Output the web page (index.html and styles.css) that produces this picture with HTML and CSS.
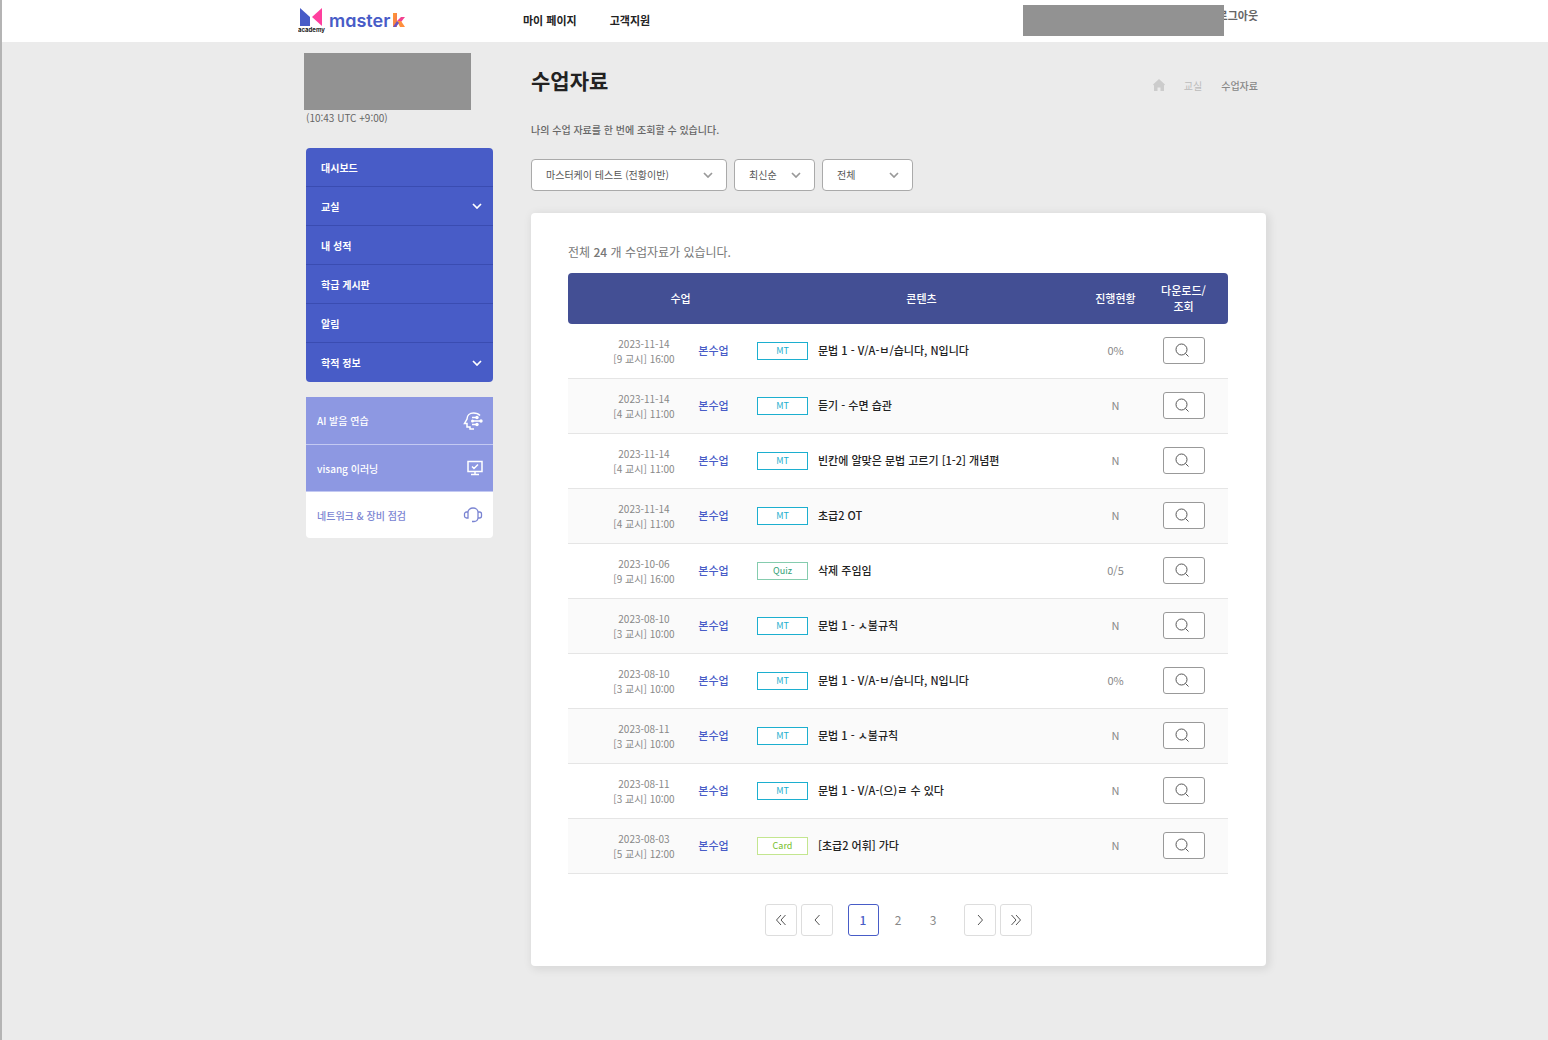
FILE: index.html
```html
<!DOCTYPE html>
<html lang="ko">
<head>
    <meta charset="UTF-8">
    <meta name="viewport" content="width=device-width, initial-scale=1.0">
    <title>수업자료 - master k academy</title>
    <link rel="stylesheet" href="styles.css">
</head>
<body>
    <svg class="sprite" aria-hidden="true">
        <symbol id="icon-down" viewBox="0 0 10 6"><path d="M1 1l4 4 4-4"/></symbol>
        <symbol id="icon-search" viewBox="0 0 14 14"><circle cx="6.500" cy="6.500" r="5.500"/><path d="M10.500 10.500l3 3"/></symbol>
    </svg>

    <header class="header">
        <div class="container header-inner">
            <a href="#" class="logo" aria-label="master k academy">
                <svg width="110" height="30" viewBox="0 0 110 30">
                    <defs>
                        <linearGradient id="k-color" x1="0" y1="0" x2="1" y2="1">
                            <stop offset="0" stop-color="#ff9d2e"/>
                            <stop offset="0.6" stop-color="#f97f4b"/>
                            <stop offset="1" stop-color="#ff9d2e"/>
                        </linearGradient>
                    </defs>
                    <path d="M2 3l10 9v9H2z" fill="#485cc7"/>
                    <path d="M24 3v18L14 12z" fill="#ff3f9e"/>
                    <text x="0" y="27" class="logo-sub">academy</text>
                    <text x="31" y="22" class="logo-name">master</text>
                    <path d="M95 8h4v14h-4z" fill="url(#k-color)"/>
                    <path d="M99 16l4-4h4l-4 5z" fill="#f2408f"/>
                    <path d="M99 16l4 0 4 6h-5z" fill="#ff8f3c"/>
                    <path d="M99 16l2 2-3 4h-3z" fill="#6a52c0"/>
                </svg>
            </a>
            <nav class="main-nav">
                <a href="#">마이 페이지</a>
                <a href="#">고객지원</a>
            </nav>
            <div class="account">
                <span class="account-name"></span>
                <a href="#" class="logout">로그아웃</a>
            </div>
        </div>
    </header>

    <div class="container layout">
        <aside class="sidebar">
            <div class="profile"></div>
            <p class="timezone">(10:43 UTC +9:00)</p>

            <nav class="side-menu">
                <a href="#">대시보드</a>
                <a href="#">교실 <svg class="chevron"><use href="#icon-down"/></svg></a>
                <a href="#">내 성적</a>
                <a href="#">학급 게시판</a>
                <a href="#">알림</a>
                <a href="#">학적 정보 <svg class="chevron"><use href="#icon-down"/></svg></a>
            </nav>

            <nav class="side-links">
                <a href="#">
                    AI 발음 연습
                    <svg width="20" height="18" viewBox="0 0 20 18">
                        <path d="M17 3.500C15.500 1.800 13 1 10.500 1 6.500 1 4 3.500 4 7L1.500 11.500H4V15h3v2h4"/>
                        <path d="M9 9h9M9 5.500h5M9 12.500h5"/>
                        <circle class="dot" cx="9.500" cy="9" r="1.500"/>
                        <circle class="dot" cx="14" cy="5.500" r="1.700"/>
                        <circle class="dot" cx="14" cy="12.500" r="1.700"/>
                        <circle class="dot" cx="18" cy="9" r="1.700"/>
                    </svg>
                </a>
                <a href="#">
                    visang 이러닝
                    <svg width="16" height="16" viewBox="0 0 16 16">
                        <path d="M1 1.500h14v10H1zM8 11.500v3M4 14.500h8M5 6.500l2 2 4-4"/>
                    </svg>
                </a>
                <a href="#" class="light">
                    네트워크 &amp; 장비 점검
                    <svg width="20" height="16" viewBox="0 0 20 16">
                        <path d="M5 5v6H3.500A2 2 0 0 1 1.500 9V7a2 2 0 0 1 2-2zM5 5a5 4 0 0 1 10 0v6a4 4 0 0 1-4 3.500H9M15 5h1.500a2 2 0 0 1 2 2v2a2 2 0 0 1-2 2H15"/>
                    </svg>
                </a>
            </nav>
        </aside>

        <main>
            <div class="page-head">
                <h1>수업자료</h1>
                <nav class="breadcrumb">
                    <a href="#" aria-label="홈"><svg width="12" height="12" viewBox="0 0 12 12"><path d="M6 0l6 5.500-1 1V12H7.500V8.500h-3V12H1V6.500l-1-1z"/></svg></a>
                    <a href="#">교실</a>
                    <strong>수업자료</strong>
                </nav>
            </div>
            <p class="description">나의 수업 자료를 한 번에 조회할 수 있습니다.</p>

            <div class="filters">
                <div class="select-box wide">
                    <select aria-label="반"><option>마스터케이 테스트 (전황이반)</option></select>
                    <svg class="chevron"><use href="#icon-down"/></svg>
                </div>
                <div class="select-box">
                    <select aria-label="정렬"><option>최신순</option></select>
                    <svg class="chevron"><use href="#icon-down"/></svg>
                </div>
                <div class="select-box medium">
                    <select aria-label="구분"><option>전체</option></select>
                    <svg class="chevron"><use href="#icon-down"/></svg>
                </div>
            </div>

            <section class="card">
                <p class="total">전체 <b>24</b> 개 수업자료가 있습니다.</p>

                <table class="materials">
                    <colgroup>
                        <col class="col-date"><col class="col-kind"><col class="col-type"><col><col class="col-progress"><col class="col-view">
                    </colgroup>
                    <thead>
                        <tr>
                            <th colspan="2" class="th-class">수업</th>
                            <th colspan="2" class="th-content">콘텐츠</th>
                            <th>진행현황</th>
                            <th class="view">다운로드/<br>조회</th>
                        </tr>
                    </thead>
                    <tbody>
                        <tr>
                            <td class="date">2023-11-14<br>[9 교시] 16:00</td>
                            <td class="kind">본수업</td>
                            <td class="type"><span class="badge">MT</span></td>
                            <td class="title">문법 1 - V/A-ㅂ/습니다, N입니다</td>
                            <td>0%</td>
                            <td class="view"><button type="button" aria-label="조회"><svg><use href="#icon-search"/></svg></button></td>
                        </tr>
                        <tr>
                            <td class="date">2023-11-14<br>[4 교시] 11:00</td>
                            <td class="kind">본수업</td>
                            <td class="type"><span class="badge">MT</span></td>
                            <td class="title">듣기 - 수면 습관</td>
                            <td>N</td>
                            <td class="view"><button type="button" aria-label="조회"><svg><use href="#icon-search"/></svg></button></td>
                        </tr>
                        <tr>
                            <td class="date">2023-11-14<br>[4 교시] 11:00</td>
                            <td class="kind">본수업</td>
                            <td class="type"><span class="badge">MT</span></td>
                            <td class="title">빈칸에 알맞은 문법 고르기 [1-2] 개념편</td>
                            <td>N</td>
                            <td class="view"><button type="button" aria-label="조회"><svg><use href="#icon-search"/></svg></button></td>
                        </tr>
                        <tr>
                            <td class="date">2023-11-14<br>[4 교시] 11:00</td>
                            <td class="kind">본수업</td>
                            <td class="type"><span class="badge">MT</span></td>
                            <td class="title">초급2 OT</td>
                            <td>N</td>
                            <td class="view"><button type="button" aria-label="조회"><svg><use href="#icon-search"/></svg></button></td>
                        </tr>
                        <tr>
                            <td class="date">2023-10-06<br>[9 교시] 16:00</td>
                            <td class="kind">본수업</td>
                            <td class="type"><span class="badge quiz">Quiz</span></td>
                            <td class="title">삭제 주임임</td>
                            <td>0/5</td>
                            <td class="view"><button type="button" aria-label="조회"><svg><use href="#icon-search"/></svg></button></td>
                        </tr>
                        <tr>
                            <td class="date">2023-08-10<br>[3 교시] 10:00</td>
                            <td class="kind">본수업</td>
                            <td class="type"><span class="badge">MT</span></td>
                            <td class="title">문법 1 - ㅅ불규칙</td>
                            <td>N</td>
                            <td class="view"><button type="button" aria-label="조회"><svg><use href="#icon-search"/></svg></button></td>
                        </tr>
                        <tr>
                            <td class="date">2023-08-10<br>[3 교시] 10:00</td>
                            <td class="kind">본수업</td>
                            <td class="type"><span class="badge">MT</span></td>
                            <td class="title">문법 1 - V/A-ㅂ/습니다, N입니다</td>
                            <td>0%</td>
                            <td class="view"><button type="button" aria-label="조회"><svg><use href="#icon-search"/></svg></button></td>
                        </tr>
                        <tr>
                            <td class="date">2023-08-11<br>[3 교시] 10:00</td>
                            <td class="kind">본수업</td>
                            <td class="type"><span class="badge">MT</span></td>
                            <td class="title">문법 1 - ㅅ불규칙</td>
                            <td>N</td>
                            <td class="view"><button type="button" aria-label="조회"><svg><use href="#icon-search"/></svg></button></td>
                        </tr>
                        <tr>
                            <td class="date">2023-08-11<br>[3 교시] 10:00</td>
                            <td class="kind">본수업</td>
                            <td class="type"><span class="badge">MT</span></td>
                            <td class="title">문법 1 - V/A-(으)ㄹ 수 있다</td>
                            <td>N</td>
                            <td class="view"><button type="button" aria-label="조회"><svg><use href="#icon-search"/></svg></button></td>
                        </tr>
                        <tr>
                            <td class="date">2023-08-03<br>[5 교시] 12:00</td>
                            <td class="kind">본수업</td>
                            <td class="type"><span class="badge word-card">Card</span></td>
                            <td class="title">[초급2 어휘] 가다</td>
                            <td>N</td>
                            <td class="view"><button type="button" aria-label="조회"><svg><use href="#icon-search"/></svg></button></td>
                        </tr>
                    </tbody>
                </table>

                <nav class="pagination" aria-label="페이지">
                    <div class="page-group">
                        <button type="button" class="arrow" aria-label="처음"><svg viewBox="0 0 12 12"><path d="M6 1L1.500 6 6 11M10.500 1L6 6l4.500 5"/></svg></button>
                        <button type="button" class="arrow" aria-label="이전"><svg viewBox="0 0 12 12"><path d="M8.500 1L4 6l4.500 5"/></svg></button>
                    </div>
                    <div class="page-group">
                        <button type="button" class="current" aria-current="page">1</button>
                        <button type="button">2</button>
                        <button type="button">3</button>
                    </div>
                    <div class="page-group">
                        <button type="button" class="arrow" aria-label="다음"><svg viewBox="0 0 12 12"><path d="M4 1l4.500 5L4 11"/></svg></button>
                        <button type="button" class="arrow" aria-label="마지막"><svg viewBox="0 0 12 12"><path d="M1.500 1L6 6l-4.500 5M6 1l4.500 5L6 11"/></svg></button>
                    </div>
                </nav>
            </section>
        </main>
    </div>
</body>
</html>
```
FILE: styles.css
```css
:root {
    --primary: #485cc7;
    --table-head: #434f94;
    --light-purple: #8d98e2;
    --redacted: #929292;
}

* {
    box-sizing: border-box;
}

body {
    margin: 0;
    min-height: 100vh;
    border-left: 2px solid #b4b4b4;
    background-color: #ebebeb;
    color: #666;
    font-family: "Noto Sans CJK KR", sans-serif;
    font-size: 11px;
    line-height: 15px;
}

a {
    color: inherit;
    text-decoration: none;
}

p, h1 {
    margin: 0;
}

button {
    font: inherit;
    cursor: pointer;
}

svg {
    fill: none;
    stroke: currentColor;
}

.sprite {
    display: none;
}

.container {
    max-width: 982px;
    margin: 0 auto;
    padding-left: 22px;
}

.chevron {
    width: 10px;
    height: 6px;
    stroke-width: 1.7;
}

/* Header */
.header {
    background-color: #fff;
}

.header-inner {
    display: flex;
    align-items: flex-start;
    height: 42px;
    padding: 5px 8px 0 14px;
}

.logo svg {
    display: block;
    stroke: none;
}

.logo-sub {
    fill: #222;
    font: bold 6px "Inter", sans-serif;
}

/* cv11 is the round, single-storey a */
.logo-name {
    fill: var(--primary);
    font: 600 18px "Inter", sans-serif;
    font-feature-settings: "cv11";
}

.main-nav {
    display: flex;
    gap: 33px;
    margin-left: 115px;
    padding-top: 8px;
    color: #222;
    font-weight: bold;
}

.account {
    display: flex;
    margin-left: auto;
}

/* The name box covers the start of the logout link */
.account-name {
    position: relative;
    width: 201px;
    height: 31px;
    margin-right: -6px;
    background-color: var(--redacted);
}

.logout {
    padding-top: 3px;
    font-weight: bold;
}

/* Layout */
.layout {
    display: grid;
    grid-template-columns: 187px 1fr;
    gap: 38px;
    padding-top: 11px;
    padding-bottom: 74px;
}

/* Sidebar */
.profile {
    width: 167px;
    height: 57px;
    margin-left: -2px;
    background-color: var(--redacted);
}

.timezone {
    margin-bottom: 22px;
    font-size: 10px;
    line-height: 16px;
}

.side-menu {
    border-radius: 4px;
    background-color: var(--primary);
    color: #fff;
    font-size: 10px;
    font-weight: bold;
}

.side-menu a,
.side-links a {
    display: flex;
    align-items: center;
    justify-content: space-between;
}

.side-menu a {
    height: 39px;
    padding: 0 11px 0 15px;
    border-bottom: 1px solid #3a4cb1;
}

.side-menu a:last-child {
    border-bottom: none;
}

.side-links {
    margin-top: 15px;
    color: #fff;
    font-size: 10px;
    font-weight: 500;
}

.side-links a {
    height: 47px;
    padding: 0 10px 0 11px;
    background-color: var(--light-purple);
}

.side-links a + a {
    border-top: 1px solid #c3c9f2;
}

.side-links svg {
    stroke-width: 1.5;
}

.side-links .dot {
    fill: #fff;
    stroke: none;
}

.side-links .light {
    border-radius: 0 0 4px 4px;
    background-color: #fff;
    color: #7a84d2;
}

.side-links .light svg {
    stroke-width: 1.3;
}

/* Page heading */
.page-head {
    display: flex;
    justify-content: space-between;
    padding: 12px 8px 0 0;
}

h1 {
    color: #222;
    font-size: 21px;
    line-height: 30px;
}

.breadcrumb {
    display: flex;
    align-items: center;
    gap: 19px;
    padding-top: 10px;
    color: #bbb;
    font-size: 10px;
}

.breadcrumb svg {
    display: block;
    fill: #ccc;
    stroke: none;
}

.breadcrumb strong {
    color: #888;
    font-weight: 500;
}

.description {
    margin-top: 27px;
    font-size: 10px;
    font-weight: 500;
}

.filters {
    display: flex;
    gap: 7px;
    margin: 22px 0;
}

.select-box {
    position: relative;
    width: 81px;
    color: #999;
}

.select-box.wide {
    width: 196px;
}

.select-box.medium {
    width: 91px;
}

.select-box select {
    appearance: none;
    display: block;
    width: 100%;
    height: 32px;
    padding: 0 14px 1px;
    border: 1px solid #aaa;
    border-radius: 4px;
    background-color: #fff;
    color: #555;
    font-family: inherit;
    font-size: 10px;
}

.select-box .chevron {
    position: absolute;
    top: 13px;
    right: 14px;
    pointer-events: none;
}

/* Material list */
.card {
    padding: 30px 38px 30px 37px;
    border-radius: 4px;
    background-color: #fff;
    box-shadow: 2px 2px 8px 2px rgba(0, 0, 0, 0.08);
}

.total {
    margin-bottom: 13px;
    color: #777;
    font-size: 12px;
    line-height: 17px;
}

.total b {
    font-weight: 500;
}

.materials {
    width: 100%;
    border-collapse: separate;
    border-spacing: 0;
    table-layout: fixed;
    text-align: center;
}

.col-date {
    width: 114px;
}

.col-kind {
    width: 63px;
}

.col-type {
    width: 73px;
}

.col-progress {
    width: 67px;
}

.col-view {
    width: 79px;
}

.materials th,
.materials td {
    padding: 0 0 2px;
}

.materials th {
    height: 51px;
    background-color: var(--table-head);
    color: #fff;
    font-weight: 500;
    line-height: 16px;
}

.materials th:first-child {
    border-radius: 4px 0 0 4px;
}

.materials th:last-child {
    border-radius: 0 4px 4px 0;
}

.materials .th-class {
    padding-left: 48px;
}

.materials .th-content {
    padding-left: 16px;
}

.materials td {
    height: 55px;
    border-bottom: 1px solid #e5e5e5;
    color: #888;
}

.materials tbody tr:nth-child(even) {
    background-color: #fafafa;
}

.materials .date {
    padding: 0 0 0 38px;
    font-size: 10px;
}

.materials .kind {
    color: var(--primary);
    font-weight: 500;
}

.materials .type {
    padding: 0 10px 0 12px;
}

.materials .title {
    color: #222;
    font-weight: 500;
    text-align: left;
}

.materials .view {
    padding-right: 10px;
}

.materials button {
    display: block;
    width: 42px;
    height: 27px;
    margin: 0 auto;
    padding: 0 4px 0 0;
    border: 1px solid #999;
    border-radius: 3px;
    background-color: #fff;
    color: #555;
}

.materials button svg {
    display: block;
    width: 14px;
    height: 14px;
    margin: 0 auto;
}

.badge {
    display: block;
    height: 18px;
    border: 1px solid #1cafcf;
    background-color: #fff;
    color: #1cafcf;
    font-size: 9px;
    line-height: 16px;
}

.badge.quiz {
    border-color: #85ccae;
    color: #33a177;
}

.badge.word-card {
    border-color: #c3e68f;
    color: #76c02c;
}

/* Pagination */
.pagination {
    display: flex;
    justify-content: center;
    gap: 15px;
    margin-top: 30px;
}

.page-group {
    display: flex;
    gap: 4px;
}

.pagination button {
    width: 31px;
    height: 32px;
    padding: 0 0 1px;
    border: 1px solid transparent;
    border-radius: 3px;
    background-color: #fff;
    color: #888;
    font-size: 12px;
}

.pagination .current {
    border-color: var(--primary);
    color: var(--primary);
    font-weight: 500;
}

.pagination .arrow {
    width: 32px;
    padding: 0;
    border-color: #ddd;
    color: #555;
}

.pagination svg {
    display: block;
    width: 12px;
    height: 12px;
    margin: 0 auto;
}
```
